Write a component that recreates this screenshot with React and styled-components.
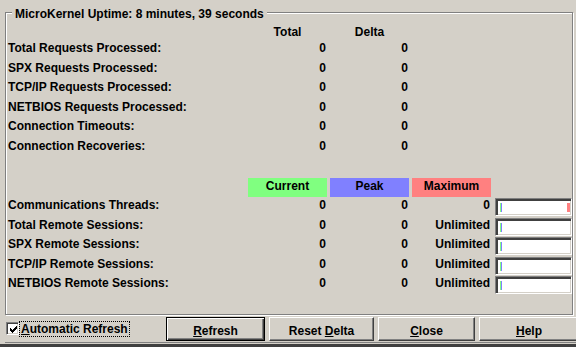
import React from 'react';
import styled, { createGlobalStyle } from 'styled-components';

const colors = {
  face: '#d4d0c8',
  shadow: '#808080',
  dark: '#404040',
  light: '#ffffff',
  current: '#80ff80',
  peak: '#8080ff',
  maximum: '#ff8080'
};

const requestRows = [
  'Total Requests Processed:',
  'SPX Requests Processed:',
  'TCP/IP Requests Processed:',
  'NETBIOS Requests Processed:',
  'Connection Timeouts:',
  'Connection Recoveries:'
];

const sessionRows = [
  { label: 'Communications Threads:', max: '0', limited: true },
  { label: 'Total Remote Sessions:', max: 'Unlimited' },
  { label: 'SPX Remote Sessions:', max: 'Unlimited' },
  { label: 'TCP/IP Remote Sessions:', max: 'Unlimited' },
  { label: 'NETBIOS Remote Sessions:', max: 'Unlimited' }
];

const GlobalStyle = createGlobalStyle`
  html, body {
    margin: 0;
    padding: 0;
    background: ${colors.face};
  }
  body {
    font-family: "Liberation Sans", Arial, sans-serif;
    font-size: 12px;
    font-weight: bold;
    color: #000;
  }
`;

const Window = styled.div`
  width: 576px;
  height: 347px;
  box-sizing: border-box;
  overflow: hidden;
  background: ${colors.face};
  padding-left: 5px;
  padding-bottom: 1px;
  border-bottom: 3px solid ${colors.dark};
  display: flex;
  flex-direction: column;
`;

const Group = styled.fieldset`
  box-sizing: border-box;
  height: 311px;
  margin: 4px 3px 0 0;
  padding: 3px 0 0 2px;
  min-width: 0;
  border: 1px solid ${colors.shadow};
  box-shadow: inset 1px 1px 0 ${colors.light}, 1px 1px 0 ${colors.light};
`;

const Legend = styled.legend`
  margin-left: 4px;
  padding: 4px 3px 0;
  line-height: 13px;
  background: ${colors.face};
`;

const Grid = styled.div`
  display: grid;
  grid-template-columns: 237px 79px 79px 79px 1fr;
  grid-template-rows: ${p => p.$head}px;
  grid-auto-rows: 19.5px;
  column-gap: 3px;
  margin-top: ${p => p.$top || 0}px;
  line-height: 17px;
`;

const Label = styled.div`
  grid-column: 1;
  white-space: nowrap;
`;

const Value = styled.div`
  text-align: right;
  padding-right: 1px;
`;

const ColHead = styled.div`
  grid-column: ${p => p.$col};
  text-align: center;
  line-height: ${p => (p.$tone ? 16 : 17)}px;
  background: ${p => (p.$tone ? colors[p.$tone] : 'transparent')};
`;

const Gauge = styled.div`
  box-sizing: border-box;
  height: 18px;
  margin: 1px 0 0 1px;
  display: flex;
  padding: 3px 1px 2px 3px;
  background: #fff;
  border: 1px solid;
  border-color: ${colors.shadow} ${colors.light} ${colors.light} ${colors.shadow};
  box-shadow: inset 2px 2px 0 ${colors.dark}, inset -1px -1px 0 ${colors.face};
`;

const Fill = styled.span`
  width: ${p => p.$w || 1}px;
  margin: 1px 0;
  background: ${p => colors[p.$tone]};
  margin-left: ${p => (p.$end ? 'auto' : '0')};
  &:first-child {
    margin-left: 1px;
  }
`;

const Footer = styled.div`
  box-sizing: border-box;
  height: 28px;
  display: grid;
  grid-template-columns: 161px auto;
  align-items: start;
  border-bottom: 1px solid ${colors.shadow};
`;

const CheckRow = styled.label`
  display: flex;
  align-items: flex-start;
  margin-left: 1px;
  white-space: nowrap;
`;

const CheckBox = styled.span`
  box-sizing: border-box;
  flex-shrink: 0;
  width: 13px;
  height: 13px;
  margin-top: 7px;
  display: flex;
  align-items: center;
  justify-content: center;
  background: #fff;
  border: 1px solid;
  border-color: ${colors.shadow} ${colors.light} ${colors.light} ${colors.shadow};
  box-shadow: inset 1px 1px 0 ${colors.dark}, inset -1px -1px 0 ${colors.face};
  svg {
    display: block;
    margin: 1px 0 0 1px;
  }
`;

const FocusText = styled.span`
  margin-top: 6px;
  padding: 0 1px;
  line-height: 14px;
  border: 1px dotted #000;
`;

const ButtonRow = styled.div`
  display: flex;
  gap: 4px;
  margin-top: 2px;
`;

const Button = styled.button`
  box-sizing: border-box;
  flex-shrink: 0;
  width: ${p => p.$w}px;
  height: 24px;
  padding: 3px 0 0;
  font: inherit;
  color: #000;
  background: ${colors.face};
  border: 1px solid;
  border-color: ${p =>
    p.$default ? '#000' : `${colors.light} ${colors.dark} ${colors.dark} ${colors.light}`};
  box-shadow: ${p =>
    p.$default
      ? `inset 1px 1px 0 ${colors.light}, inset -1px -1px 0 ${colors.dark}, inset -2px -2px 0 ${colors.shadow}`
      : `inset -1px -1px 0 ${colors.shadow}`};
`;

const CheckMark = () => (
  <svg width="7" height="7" viewBox="0 0 7 7" shapeRendering="crispEdges">
    <path
      d="M0 2h1v3h-1z M1 3h1v3h-1z M2 4h1v3h-1z M3 3h1v3h-1z M4 2h1v3h-1z M5 1h1v3h-1z M6 0h1v3h-1z"
      fill="#000"
    />
  </svg>
);

export default function App() {
  return (
    <Window>
      <GlobalStyle />
      <Group>
        <Legend>MicroKernel Uptime: 8 minutes, 39 seconds</Legend>
        <Grid $head={16}>
          <ColHead $col={2}>Total</ColHead>
          <ColHead $col={3}>Delta</ColHead>
          {requestRows.map(label => (
            <React.Fragment key={label}>
              <Label>{label}</Label>
              <Value>0</Value>
              <Value>0</Value>
            </React.Fragment>
          ))}
        </Grid>
        <Grid $head={19} $top={21}>
          <ColHead $col={2} $tone="current">Current</ColHead>
          <ColHead $col={3} $tone="peak">Peak</ColHead>
          <ColHead $col={4} $tone="maximum">Maximum</ColHead>
          {sessionRows.map(row => (
            <React.Fragment key={row.label}>
              <Label>{row.label}</Label>
              <Value>0</Value>
              <Value>0</Value>
              <Value>{row.max}</Value>
              <Gauge>
                <Fill $tone="current" />
                <Fill $tone="peak" />
                {row.limited && <Fill $tone="maximum" $w={3} $end />}
              </Gauge>
            </React.Fragment>
          ))}
        </Grid>
      </Group>
      <Footer>
        <CheckRow>
          <CheckBox>
            <CheckMark />
          </CheckBox>
          <FocusText>
            <u>A</u>utomatic Refresh
          </FocusText>
        </CheckRow>
        <ButtonRow>
          <Button $w={99} $default>
            <u>R</u>efresh
          </Button>
          <Button $w={105}>
            Reset <u>D</u>elta
          </Button>
          <Button $w={97}>
            <u>C</u>lose
          </Button>
          <Button $w={100}>
            <u>H</u>elp
          </Button>
        </ButtonRow>
      </Footer>
    </Window>
  );
}
